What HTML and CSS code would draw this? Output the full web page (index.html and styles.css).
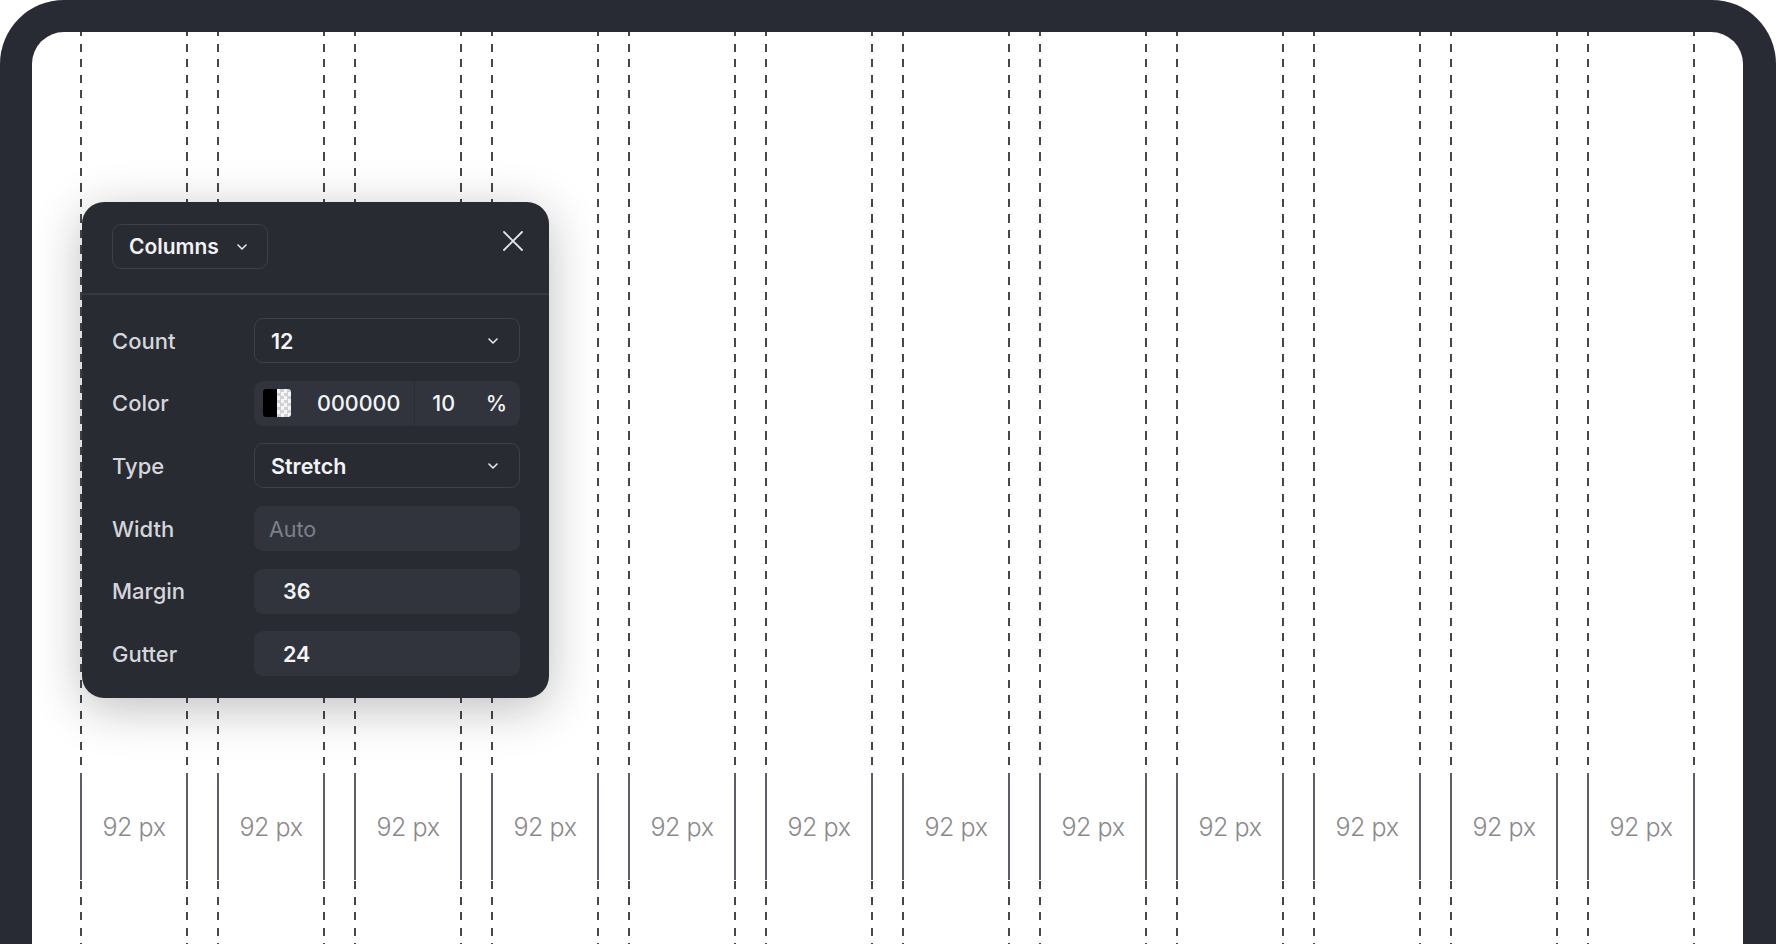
FILE: index.html
```html
<!DOCTYPE html>
<html lang="en">
<head>
<meta charset="utf-8">
<title>Layout grid</title>
<link rel="stylesheet" href="styles.css">
</head>
<body>
<div class="device">
  <div class="screen">
    <div class="grid">
      <div class="col"><div class="measure">92 px</div></div>
      <div class="col"><div class="measure">92 px</div></div>
      <div class="col"><div class="measure">92 px</div></div>
      <div class="col"><div class="measure">92 px</div></div>
      <div class="col"><div class="measure">92 px</div></div>
      <div class="col"><div class="measure">92 px</div></div>
      <div class="col"><div class="measure">92 px</div></div>
      <div class="col"><div class="measure">92 px</div></div>
      <div class="col"><div class="measure">92 px</div></div>
      <div class="col"><div class="measure">92 px</div></div>
      <div class="col"><div class="measure">92 px</div></div>
      <div class="col"><div class="measure">92 px</div></div>
    </div>

    <div class="panel">
      <div class="panel-head">
        <button class="mode-btn">Columns
          <svg class="chev" width="10" height="6" viewBox="0 0 10 6"><path d="M1 1l4 4 4-4" fill="none" stroke="#e8e9ec" stroke-width="1.6" stroke-linecap="round" stroke-linejoin="round"/></svg>
        </button>
        <svg class="close" width="20" height="20" viewBox="0 0 20 20"><path d="M1 1L19 19M19 1L1 19" fill="none" stroke="#e4e5e8" stroke-width="1.8" stroke-linecap="round"/></svg>
      </div>
      <div class="panel-body">
        <div class="row">
          <span class="label">Count</span>
          <div class="field outlined"><span class="value">12</span>
            <svg class="chev" width="10" height="6" viewBox="0 0 10 6"><path d="M1 1l4 4 4-4" fill="none" stroke="#e8e9ec" stroke-width="1.6" stroke-linecap="round" stroke-linejoin="round"/></svg>
          </div>
        </div>
        <div class="row">
          <span class="label">Color</span>
          <div class="field filled color-field">
            <span class="swatch"><span class="swatch-solid"></span><span class="swatch-alpha"></span></span>
            <span class="value hex">000000</span>
            <span class="sep"></span>
            <span class="value opacity">10</span>
            <span class="value pct">%</span>
          </div>
        </div>
        <div class="row">
          <span class="label">Type</span>
          <div class="field outlined"><span class="value">Stretch</span>
            <svg class="chev" width="10" height="6" viewBox="0 0 10 6"><path d="M1 1l4 4 4-4" fill="none" stroke="#e8e9ec" stroke-width="1.6" stroke-linecap="round" stroke-linejoin="round"/></svg>
          </div>
        </div>
        <div class="row">
          <span class="label">Width</span>
          <div class="field filled"><span class="placeholder">Auto</span></div>
        </div>
        <div class="row">
          <span class="label">Margin</span>
          <div class="field filled num"><span class="value">36</span></div>
        </div>
        <div class="row">
          <span class="label">Gutter</span>
          <div class="field filled num"><span class="value">24</span></div>
        </div>
      </div>
    </div>
  </div>
</div>
</body>
</html>
```
FILE: styles.css
```css
* { box-sizing: border-box; }
html, body {
  margin: 0;
  height: 944px;
  overflow: hidden;
  background: #ffffff;
  font-family: Inter, "Noto Sans", "Liberation Sans", sans-serif;
}
.device {
  background: #282b33;
  border-radius: 64px 64px 0 0;
  padding: 32px 33px 0 32px;
  height: 1000px;
}
.screen {
  position: relative;
  background: #ffffff;
  border-radius: 32px 32px 0 0;
  height: 968px;
  padding: 0 48px;
}
.grid {
  display: grid;
  grid-template-columns: repeat(12, 108px);
  column-gap: 29px;
  height: 100%;
}
.col {
  display: flex;
  flex-direction: column;
  padding-top: 741px;
  background:
    repeating-linear-gradient(to bottom, #45474d 0 8px, transparent 8px 15.5px) left -3.5px / 2px 100% no-repeat,
    repeating-linear-gradient(to bottom, #45474d 0 8px, transparent 8px 15.5px) right -3.5px / 2px 100% no-repeat;
}
.measure {
  height: 107px;
  border-left: 2px solid #5c5f69;
  border-right: 2px solid #5c5f69;
  background: #ffffff;
  display: flex;
  align-items: center;
  justify-content: center;
  font-size: 25px;
  font-weight: 300;
  color: #8a8a8c;
  letter-spacing: -0.4px;
}

.panel {
  position: absolute;
  left: 50px;
  top: 170px;
  width: 467px;
  background: #282b32;
  border-radius: 22px;
  box-shadow: 0 10px 48px rgba(20, 22, 28, 0.28);
  color: #f1f2f4;
}
.panel-head {
  display: flex;
  align-items: center;
  justify-content: space-between;
  padding: 22px 26px 24px 30px;
  border-bottom: 2px solid #363940;
}
.mode-btn {
  display: flex;
  align-items: center;
  gap: 18px;
  height: 45px;
  width: 156px;
  padding: 0 0 0 16px;
  background: #282b32;
  border: 1px solid #3d4049;
  border-radius: 9px;
  font-family: inherit;
  font-size: 21px;
  font-weight: 600;
  color: #f1f2f4;
}
.close { display: block; margin-top: -12px; }
.panel-body {
  display: flex;
  flex-direction: column;
  gap: 17.7px;
  padding: 23px 29px 22px 30px;
}
.row {
  display: flex;
  align-items: center;
}
.label {
  width: 142px;
  font-size: 22px;
  font-weight: 500;
  color: #d4d6db;
}
.field {
  flex: 1;
  height: 45px;
  border-radius: 9px;
  display: flex;
  align-items: center;
  padding: 0 21px 0 16px;
  font-size: 21.5px;
}
.outlined {
  border: 1px solid #3d4049;
  justify-content: space-between;
}
.filled { background: #31343c; padding-left: 15px; }
.num { padding-left: 29px; }
.value { font-weight: 600; color: #f3f4f6; }
.placeholder { color: #7d8089; font-weight: 400; }

.color-field { padding: 0 13px 0 9px; }
.swatch {
  display: flex;
  width: 28px;
  height: 28px;
  border-radius: 3px;
  overflow: hidden;
}
.swatch-solid { flex: 1; background: #000000; }
.swatch-alpha {
  flex: 1;
  background: repeating-conic-gradient(#cfd1d4 0 25%, #f5f5f6 0 50%) 0 0 / 7px 7px;
}
.hex { margin-left: 26px; font-weight: 500; }
.sep {
  width: 1px;
  align-self: stretch;
  background: #2a2d34;
  margin-left: 14px;
}
.opacity { margin-left: 17px; font-weight: 500; }
.pct { margin-left: auto; font-weight: 500; }
```
